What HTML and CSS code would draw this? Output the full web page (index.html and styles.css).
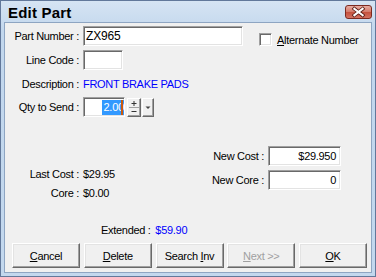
FILE: index.html
```html
<!DOCTYPE html>
<html>
<head>
<meta charset="utf-8">
<link rel="stylesheet" href="styles.css">
</head>
<body>
<div class="window">
  <div class="titlebar">
    <span class="title">Edit Part</span>
    <span class="close">
      <svg width="27" height="14" viewBox="0 0 27 14">
        <path d="M9 3.5 L18 10.5 M18 3.5 L9 10.5" stroke="#5a1c14" stroke-width="4" stroke-linecap="square"/>
        <path d="M9 3.5 L18 10.5 M18 3.5 L9 10.5" stroke="#ffffff" stroke-width="2.2" stroke-linecap="square"/>
      </svg>
    </span>
  </div>
  <div class="client">
    <div class="row r1">
      <span class="lbl">Part Number :</span>
      <div class="field w-part">ZX965</div>
      <div class="check"><span class="box"></span><span class="check-text"><u>A</u>lternate Number</span></div>
    </div>
    <div class="row r2">
      <span class="lbl">Line Code :</span>
      <div class="field w-line"></div>
    </div>
    <div class="row r3">
      <span class="lbl">Description :</span>
      <span class="blue">FRONT BRAKE PADS</span>
    </div>
    <div class="row r4">
      <span class="lbl">Qty to Send :</span>
      <div class="field w-qty qty"><span class="sel">2.00</span><span class="caret"></span></div>
      <div class="spin">
        <svg width="12" height="17" viewBox="0 0 12 17">
          <path d="M6 2 V7 M3.5 4.5 H8.5" stroke="#333" stroke-width="1"/>
          <path d="M1 8.5 H11" stroke="#a0a0a0" stroke-width="1"/>
          <path d="M3.5 12.5 H8.5" stroke="#333" stroke-width="1"/>
        </svg>
      </div>
      <div class="drop">
        <svg width="10" height="17" viewBox="0 0 10 17"><path d="M2.5 7.5 H7.5 L5 10 Z" fill="#444"/></svg>
      </div>
    </div>
    <div class="costs">
      <div class="left">
        <span class="lbl2">Last Cost :</span><span class="val">$29.95</span>
        <span class="lbl2">Core :</span><span class="val">$0.00</span>
      </div>
      <div class="right">
        <span class="lbl3">New Cost :</span><div class="field w-cost num">$29.950</div>
        <span class="lbl3">New Core :</span><div class="field w-cost num">0</div>
      </div>
    </div>
    <div class="extended">Extended : <span class="blue ext-val">$59.90</span></div>
    <div class="buttons">
      <div class="btn"><span><u>C</u>ancel</span></div>
      <div class="btn"><span><u>D</u>elete</span></div>
      <div class="btn"><span>Search <u>I</u>nv</span></div>
      <div class="btn disabled"><span><u>N</u>ext &gt;&gt;</span></div>
      <div class="btn"><span><u>O</u>K</span></div>
    </div>
  </div>
</div>
</body>
</html>
```
FILE: styles.css
```css
html, body {
  margin: 0;
  padding: 0;
  background: #ffffff;
}
body {
  font-family: "Liberation Sans", Arial, sans-serif;
  font-size: 11px;
  letter-spacing: -0.3px;
  color: #000;
}
.window {
  box-sizing: border-box;
  width: 376px;
  height: 277px;
  border: 1px solid #62789a;
  background: linear-gradient(#d6e4f3, #c2d7ed 30px, #c3d8ee);
  padding: 0 3px 3px 3px;
  display: flex;
  flex-direction: column;
}
.titlebar {
  height: 21px;
  display: flex;
  align-items: flex-start;
  justify-content: space-between;
}
.title {
  font-size: 15px;
  font-weight: bold;
  letter-spacing: 0.2px;
  margin: 3px 0 0 4px;
  line-height: 17px;
}
.close {
  margin-top: 4px;
  width: 27px;
  height: 14px;
  box-sizing: border-box;
  border: 1px solid #7c2a20;
  border-radius: 3px;
  background: linear-gradient(#e8ada2, #d47868 50%, #c4503c 51%, #d47262);
  display: flex;
  align-items: center;
  justify-content: center;
  overflow: hidden;
}
.close svg { display: block; margin-top: -1px; }
.client {
  flex: 1;
  border: 1px solid #8ea5c2;
  background: #f0f0f0;
  display: flex;
  flex-direction: column;
  min-height: 0;
}
.row {
  display: flex;
  align-items: center;
  height: 20px;
}
.r1 { margin-top: 3px; }
.r2 { margin-top: 4px; }
.r3 { margin-top: 4px; }
.r4 { margin-top: 3px; }
.lbl {
  width: 74px;
  text-align: right;
  margin-right: 4px;
  white-space: nowrap;
}
.field {
  box-sizing: border-box;
  height: 20px;
  background: #fff;
  border: 1px solid;
  border-color: #a0a0a0 #ffffff #ffffff #a0a0a0;
  box-shadow: inset 1px 1px #696969, inset -1px -1px #e3e3e3;
  padding: 0 3px;
  display: flex;
  align-items: center;
  font-size: 12px;
  letter-spacing: -0.2px;
}
.w-part { width: 160px; padding-left: 2px; }
.w-line { width: 40px; }
.w-qty { width: 42px; }
.w-cost { width: 73px; }
.num { justify-content: flex-end; font-size: 11px; letter-spacing: -0.3px; padding-right: 4px; }
.check {
  display: flex;
  align-items: center;
  align-self: flex-end;
  margin-left: 16px;
  height: 13px;
}
.box {
  box-sizing: border-box;
  width: 13px;
  height: 13px;
  background: #fff;
  border: 1px solid;
  border-color: #a0a0a0 #fff #fff #a0a0a0;
  box-shadow: inset 1px 1px #696969, inset -1px -1px #e3e3e3;
  margin-right: 5px;
}
.check-text { white-space: nowrap; }
.blue { color: #0000ff; }
.qty {
  justify-content: flex-end;
  padding: 0 1px 0 0;
  overflow: hidden;
  font-size: 11px;
  letter-spacing: -0.2px;
}
.sel {
  background: #3399ff;
  color: #fff;
  line-height: 15px;
  padding-left: 1px;
  margin-right: -3px;
}
.caret {
  flex: none;
  width: 2px;
  height: 15px;
  background: #c85a10;
  position: relative;
  z-index: 1;
}
.spin, .drop {
  box-sizing: border-box;
  height: 19px;
  background: #f0f0f0;
  border: 1px solid;
  border-color: #fff #696969 #696969 #fff;
  box-shadow: inset -1px -1px #a0a0a0;
  display: flex;
  align-items: center;
  justify-content: center;
}
.spin { width: 14px; margin-left: 2px; }
.drop { width: 12px; margin-left: 1px; }
.spin svg, .drop svg { display: block; }
.costs {
  display: flex;
  align-items: flex-start;
  margin-top: 29px;
}
.left {
  display: grid;
  grid-template-columns: 74px auto;
  column-gap: 4px;
  grid-auto-rows: 19px;
  align-items: center;
  padding-top: 18px;
}
.lbl2 { text-align: right; white-space: nowrap; }
.right {
  margin-left: auto;
  margin-right: 30px;
  display: grid;
  grid-template-columns: auto 73px;
  column-gap: 4px;
  row-gap: 4px;
  align-items: center;
}
.lbl3 { text-align: right; white-space: nowrap; }
.extended {
  margin-top: 21px;
  margin-left: 96px;
  line-height: 14px;
  white-space: nowrap;
}
.ext-val { margin-left: 2px; }
.buttons {
  display: flex;
  gap: 3.75px;
  margin-top: 6px;
  margin-left: 7px;
}
.btn {
  box-sizing: border-box;
  width: 68px;
  height: 25px;
  background: #f0f0f0;
  border: 1px solid;
  border-color: #fff #696969 #696969 #fff;
  box-shadow: inset -1px -1px #a0a0a0, inset 1px 1px #e3e3e3;
  display: flex;
  align-items: center;
  justify-content: center;
  white-space: nowrap;
}
.btn.disabled { color: #a0a0a0; }
```
